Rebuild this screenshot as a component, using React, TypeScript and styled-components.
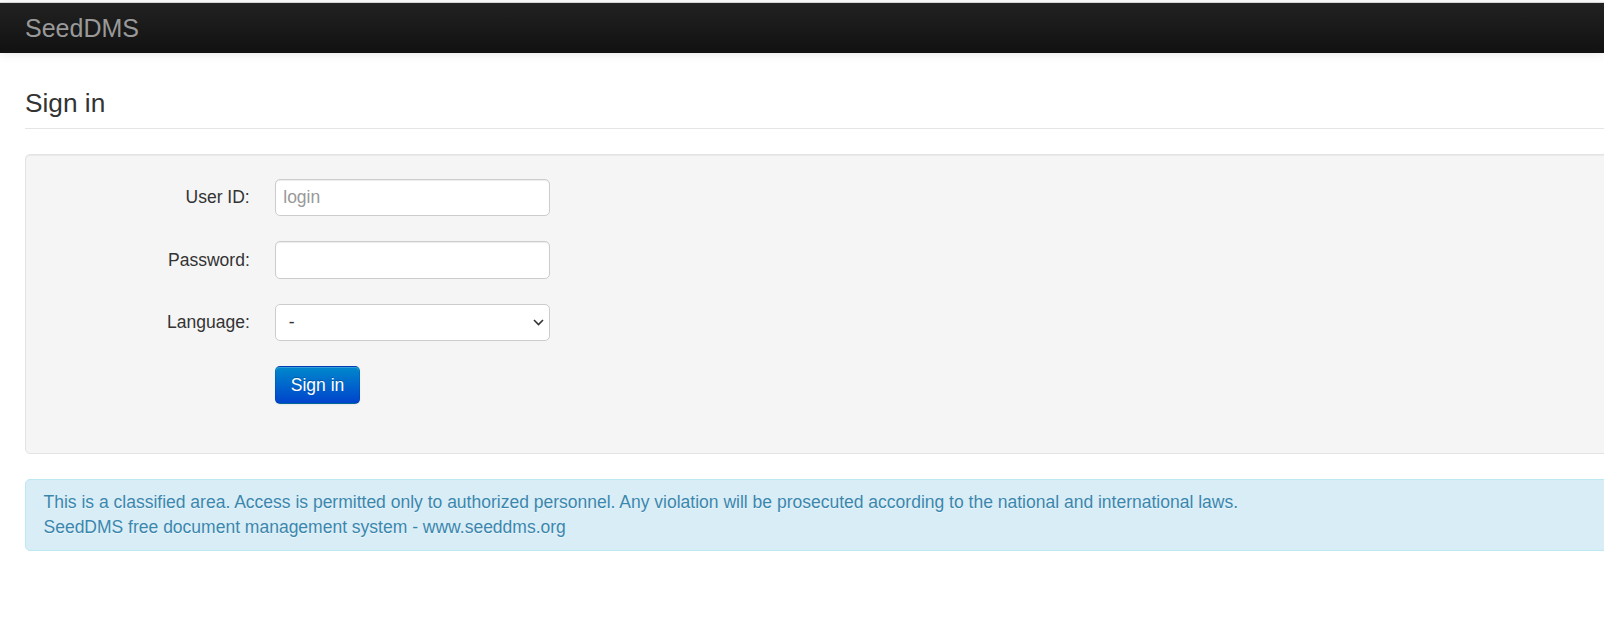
import React from 'react';
import styled, { createGlobalStyle } from 'styled-components';

const GlobalStyle = createGlobalStyle`
    html, body {
        margin: 0;
        padding: 0;
        background: #fff;
        overflow: hidden;
    }
    body {
        font-family: "Liberation Sans", Arial, Helvetica, sans-serif;
        font-size: 17.5px;
        line-height: 25px;
        color: #333;
    }
    * {
        box-sizing: border-box;
    }
`;

const Page = styled.div`
    padding-top: 2px;
    width: 100%;
`;

const NavBar = styled.div`
    height: 51px;
    border-top: 1px solid #d6d6d6;
    background-image: linear-gradient(to bottom, #222222, #111111);
    box-shadow: 0 1px 10px rgba(0, 0, 0, 0.1);
    display: flex;
    align-items: flex-start;
    position: relative;
    z-index: 2;
`;

const Brand = styled.a`
    display: block;
    padding: 12.5px 25px;
    font-size: 25px;
    line-height: 25px;
    color: #999;
    text-decoration: none;
`;

const Content = styled.div`
    width: 1640px;
    padding: 25px 0 0 25px;
`;

const Legend = styled.h3`
    margin: 0 0 25px;
    font-size: 26.25px;
    font-weight: normal;
    line-height: 50px;
    color: #333;
    border-bottom: 1px solid #e5e5e5;
`;

const Well = styled.div`
    background: #f5f5f5;
    border: 1px solid #e3e3e3;
    border-radius: 5px;
    box-shadow: inset 0 1px 1px rgba(0, 0, 0, 0.05);
    padding: 23.75px;
    margin-bottom: 25px;
`;

const Form = styled.form`
    display: grid;
    grid-template-columns: 200px 275px;
    column-gap: 25px;
    row-gap: 25px;
    padding-bottom: 25px;
`;

const Label = styled.label`
    padding-top: 6.25px;
    text-align: right;
    line-height: 25px;
    color: #333;
`;

const Field = styled.input`
    width: 275px;
    height: 37.5px;
    padding: 5px 7.5px;
    font-family: inherit;
    font-size: 17.5px;
    line-height: 25px;
    color: #555;
    background: #fff;
    border: 1px solid #ccc;
    border-radius: 5px;
    box-shadow: inset 0 1px 1px rgba(0, 0, 0, 0.075);
    outline: none;

    &::placeholder {
        color: #999;
    }
`;

const SelectWrap = styled.div`
    position: relative;
    width: 275px;
    height: 37.5px;
`;

const Select = styled.select`
    appearance: none;
    width: 100%;
    height: 100%;
    padding: 5px 30px 5px 13px;
    font-family: inherit;
    font-size: 17.5px;
    line-height: 25px;
    color: #333;
    background: #fff;
    border: 1px solid #ccc;
    border-radius: 5px;
    outline: none;
`;

const Chevron = styled.svg`
    position: absolute;
    right: 6px;
    top: 15.5px;
    pointer-events: none;
`;

const ButtonCell = styled.div`
    grid-column: 2;
`;

const PrimaryButton = styled.button`
    display: inline-block;
    padding: 5px 15px;
    height: 37.5px;
    font-family: inherit;
    font-size: 17.5px;
    line-height: 25px;
    color: #fff;
    text-shadow: 0 -1px 0 rgba(0, 0, 0, 0.25);
    background-image: linear-gradient(to bottom, #0088cc, #0044cc);
    border: 1px solid rgba(0, 0, 0, 0.1);
    border-bottom-color: rgba(0, 0, 0, 0.25);
    border-radius: 5px;
    box-shadow: inset 0 1px 0 rgba(255, 255, 255, 0.2), 0 1px 2px rgba(0, 0, 0, 0.05);
    cursor: pointer;
`;

const InfoAlert = styled.div`
    padding: 10px 43.75px 10px 17.5px;
    background: #d9edf7;
    border: 1px solid #bce8f1;
    border-radius: 5px;
    color: #3a87ad;
    text-shadow: 0 1px 0 rgba(255, 255, 255, 0.5);
    line-height: 25px;
`;

const fields = [
    { id: 'login', label: 'User ID:', type: 'text', placeholder: 'login' },
    { id: 'pwd', label: 'Password:', type: 'password', placeholder: '' },
];

export default function App() {
    return (
        <Page>
            <GlobalStyle />
            <NavBar>
                <Brand href="#">SeedDMS</Brand>
            </NavBar>
            <Content>
                <Legend>Sign in</Legend>
                <Well>
                    <Form onSubmit={e => e.preventDefault()}>
                        {fields.map(f => (
                            <React.Fragment key={f.id}>
                                <Label htmlFor={f.id}>{f.label}</Label>
                                <Field id={f.id} type={f.type} placeholder={f.placeholder} />
                            </React.Fragment>
                        ))}
                        <Label htmlFor="lang">Language:</Label>
                        <SelectWrap>
                            <Select id="lang" defaultValue="">
                                <option value="">-</option>
                                <option value="en_GB">English (GB)</option>
                                <option value="de_DE">Deutsch</option>
                            </Select>
                            <Chevron width="11" height="7" viewBox="0 0 11 7">
                                <path d="M1 1l4.5 4.5L10 1" fill="none" stroke="#333" strokeWidth="1.6" />
                            </Chevron>
                        </SelectWrap>
                        <ButtonCell>
                            <PrimaryButton type="submit">Sign in</PrimaryButton>
                        </ButtonCell>
                    </Form>
                </Well>
                <InfoAlert>
                    This is a classified area. Access is permitted only to authorized personnel. Any violation will be prosecuted according to the national and international laws.
                    <br />
                    SeedDMS free document management system - www.seeddms.org
                </InfoAlert>
            </Content>
        </Page>
    );
}
